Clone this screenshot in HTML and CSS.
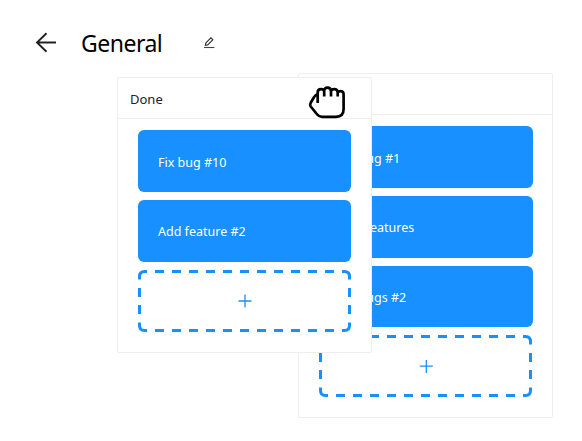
FILE: index.html
```html
<!DOCTYPE html>
<html lang="en">
<head>
<meta charset="utf-8">
<title>General</title>
<link rel="stylesheet" href="styles.css">
</head>
<body>
<header class="topbar">
  <svg class="back" viewBox="0 0 22 22" width="22" height="22"><path d="M21 10.5H2.2M11.5 1.3 2 10.5l9.5 9.2" fill="none" stroke="#222" stroke-width="1.9"/></svg>
  <h1>General</h1>
  <svg class="edit" viewBox="0 0 12 12" width="12" height="12"><path d="M1 10.5h10.4" stroke="#444" stroke-width="1.1"/><path d="M2.4 8.3 2.8 6.1 7.9 .8l2 1.9-5.2 5.2z" fill="none" stroke="#333" stroke-width="1.1"/></svg>
</header>
<main class="board">
  <section class="column column-back">
    <div class="column-head"></div>
    <div class="cards">
      <div class="card">Fix bug #1</div>
      <div class="card">Add features</div>
      <div class="card card-short">Fix bugs #2</div>
      <svg class="add" viewBox="0 0 213 62" width="213" height="62">
        <path class="dash" d="M17 1.5H196M17 60.5H196"/>
        <path class="dash-side" d="M1.5 18V44M211.5 18V44"/>
        <path class="corner" d="M9 1.5H6.5Q1.5 1.5 1.5 6.5V9.5M204 1.5h2.5Q211.5 1.5 211.5 6.5V9.5M9 60.5H6.5Q1.5 60.5 1.5 55.5V52.5M204 60.5h2.5Q211.5 60.5 211.5 55.5V52.5"/>
        <path class="plus" d="M107.3 25v13M100.8 31.2h13"/>
      </svg>
    </div>
  </section>
  <section class="column column-front">
    <div class="column-head"><span>Done</span></div>
    <div class="cards">
      <div class="card card-first">Fix bug #10</div>
      <div class="card">Add feature #2</div>
      <svg class="add" viewBox="0 0 213 62" width="213" height="62">
        <path class="dash" d="M17 1.5H196M17 60.5H196"/>
        <path class="dash-side" d="M1.5 18V44M211.5 18V44"/>
        <path class="corner" d="M9 1.5H6.5Q1.5 1.5 1.5 6.5V9.5M204 1.5h2.5Q211.5 1.5 211.5 6.5V9.5M9 60.5H6.5Q1.5 60.5 1.5 55.5V52.5M204 60.5h2.5Q211.5 60.5 211.5 55.5V52.5"/>
        <path class="plus" d="M107 24.5v13M100.5 31h13"/>
      </svg>
    </div>
  </section>
  <svg class="grab" viewBox="0 0 38 34" width="38" height="34"><path d="M9.7 18V7.5Q9.7 4.2 13 4.2Q15.8 4.2 16.2 6.5Q16 2.6 19.5 2.6Q23 2.6 23 6.5Q23.2 4.2 26.3 4.2Q29.5 4.2 29.7 7.5Q30.5 6.2 32.5 6.2Q35.6 6.2 35.6 9.5V24Q35.6 31.8 28 31.8H14Q11 31.8 9.2 29.5L2.7 21.5Q1.6 19.8 2.7 17.8L6 12.3Q7.5 10 9.7 9M16.2 5.5V11.5M23 5.5V11.5M29.7 6.5V11.5" fill="#fff" stroke="#000" stroke-width="2.7" stroke-linejoin="round"/></svg>
</main>
</body>
</html>
```

FILE: styles.css
```css
* { box-sizing: border-box; }
body {
  margin: 0;
  width: 582px;
  height: 441px;
  overflow: hidden;
  background: #fff;
  color: #222;
  font-family: "Noto Sans", "Open Sans", sans-serif;
  font-size: 13px;
}
.topbar {
  display: flex;
  align-items: center;
  height: 73px;
  padding: 12px 0 0 35px;
}
.back { margin-right: 24px; }
h1 {
  width: 122px;
  margin: 0;
  color: #000;
  font-size: 23px;
  font-weight: 400;
  line-height: 32px;
  letter-spacing: -0.5px;
}
.board { position: relative; height: 368px; }
.column {
  position: absolute;
  width: 255px;
  border: 1px solid #eee;
  border-radius: 2px;
  background: #fff;
}
.column-back { left: 298px; top: 0; height: 345px; }
.column-front { left: 117px; top: 4px; height: 276px; }
.column-head {
  height: 41px;
  padding-left: 12px;
  border-bottom: 1px solid #eee;
  line-height: 42px;
}
.cards {
  display: flex;
  flex-direction: column;
  gap: 8px;
  padding: 11px 20px 0;
}
.column-back .cards { padding-right: 19px; }
.card {
  height: 62px;
  padding-left: 20px;
  border-radius: 6px;
  background: #1890ff;
  color: #fff;
  font-size: 12.5px;
  line-height: 64px;
}
.column-back .card:first-child,
.card-first { line-height: 66px; }
.card-short { height: 61px; line-height: 64px; }
.add {
  display: block;
  fill: none;
  stroke: #1890ff;
  stroke-width: 3;
}
.dash { stroke-dasharray: 9 8; }
.dash-side { stroke-dasharray: 9 8; }
.plus { stroke-width: 1.3; }
.grab { position: absolute; left: 308px; top: 12px; }
```
